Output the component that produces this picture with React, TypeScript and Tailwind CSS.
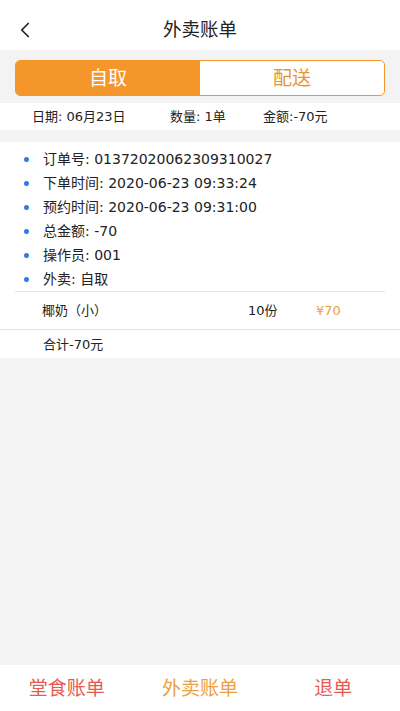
import { ChevronLeft } from 'lucide-react'

const font = { fontFamily: '"DejaVu Sans", "Noto Sans CJK SC", sans-serif' }

const details = [
  '订单号: 01372020062309310027',
  '下单时间: 2020-06-23 09:33:24',
  '预约时间: 2020-06-23 09:31:00',
  '总金额: -70',
  '操作员: 001',
  '外卖: 自取',
]

export default function App() {
  return (
    <div className="flex h-[711px] w-[400px] flex-col bg-[#f3f3f3] text-[#333]" style={font}>
      <header className="flex h-[50px] items-center bg-white pt-[10px]">
        <div className="flex w-[50px] items-center pl-[12px]">
          <ChevronLeft className="h-[26px] w-[26px] text-[#222]" strokeWidth={1.6} />
        </div>
        <h1 className="flex-1 text-center text-[18.5px] text-[#222]">外卖账单</h1>
        <div className="w-[50px]" />
      </header>

      <div className="px-[15px] pb-[7px] pt-[10px]">
        <div className="flex h-[36px] overflow-hidden rounded-[5px] border border-[#f5962a] bg-white">
          <div className="flex flex-1 items-center justify-center bg-[#f5962a] text-[19px] text-white">自取</div>
          <div className="flex flex-1 items-center justify-center text-[19px] text-[#e9952f]">配送</div>
        </div>
      </div>

      <div className="flex h-[27px] items-center bg-white text-[13px] text-[#222]">
        <span className="ml-[32px] w-[138px]">日期: 06月23日</span>
        <span className="w-[93px]">数量: 1单</span>
        <span>金额:-70元</span>
      </div>

      <div className="mt-[12px] bg-white">
        <ul className="pt-[5px]">
          {details.map((d) => (
            <li key={d} className="flex h-[24px] items-center text-[14px] leading-none text-[#222]">
              <span className="ml-[24px] mr-[14px] h-[5px] w-[5px] rounded-full bg-[#2f7de1]" />
              {d}
            </li>
          ))}
        </ul>
        <div className="mx-[15px] border-t border-[#e6e6e6]" />
        <div className="flex h-[37px] items-center text-[13px] leading-none text-[#222]">
          <span className="ml-[42px] w-[206px]">椰奶（小）</span>
          <span className="w-[68px]">10份</span>
          <span className="text-[#eba23e]">¥70</span>
        </div>
        <div className="border-t border-[#e3e3e3]" />
        <div className="flex h-[28px] items-center pl-[43px] text-[13px] leading-none text-[#222]">合计-70元</div>
      </div>

      <div className="flex-1" />

      <nav className="grid h-[46px] grid-cols-3 items-center bg-white text-[19px]">
        <span className="text-center text-[#e65a52]">堂食账单</span>
        <span className="text-center text-[#eba23e]">外卖账单</span>
        <span className="text-center text-[#e65a52]">退单</span>
      </nav>
    </div>
  )
}
